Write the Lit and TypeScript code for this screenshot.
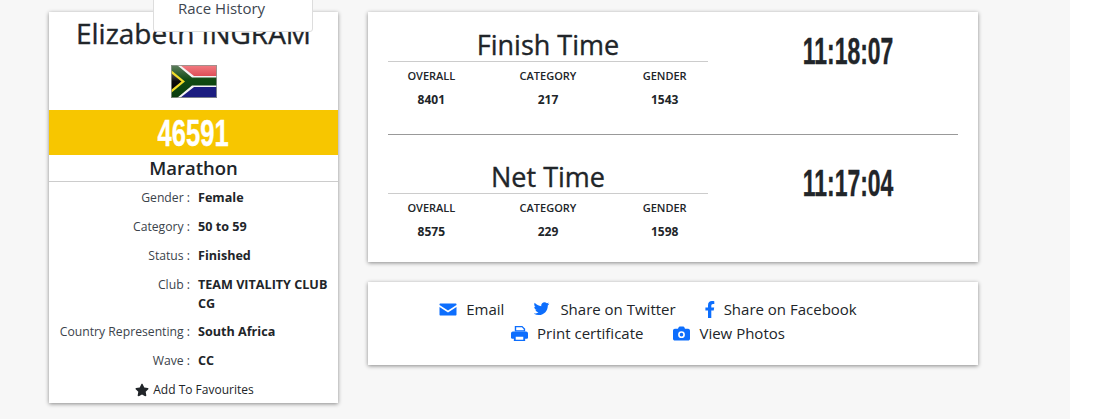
import { LitElement, html, css, svg } from "lit";
import { customElement } from "lit/decorators.js";

const ICONS = {
  mail: { box: "0 0 17 17", path: svg`<path d="M1 2.500h15c.6 0 1 .4 1 1v.6L8.500 9.500 0 4.100V3.500c0-.6.4-1 1-1z"/><path d="M0 6v7.500c0 .6.4 1 1 1h15c.6 0 1-.4 1-1V6L8.500 11.500z"/>` },
  twitter: { box: "0 0 20 20", path: svg`<path d="M16.200 5.300c0 .2 0 .3 0 .5 0 5-3.800 10.700-10.700 10.700-2.100 0-4.100-.6-5.800-1.700.3 0 .6 0 .9 0 1.800 0 3.400-.6 4.700-1.600-1.700 0-3-1.100-3.500-2.600.2 0 .5.100.7.100.3 0 .7 0 1-.1C1.700 10.200.3 8.600.3 6.700v0c.5.300 1.100.5 1.700.5C1 6.500.3 5.300.3 4c0-.7.200-1.300.5-1.900 1.900 2.300 4.600 3.800 7.800 4-.1-.3-.1-.6-.1-.9 0-2.100 1.700-3.800 3.800-3.800 1.100 0 2.100.5 2.800 1.200.9-.2 1.700-.5 2.400-.9-.3.900-.9 1.600-1.700 2.100.8-.1 1.500-.3 2.200-.6-.5.800-1.200 1.500-1.800 2z"/>` },
  facebook: { box: "3 0 10 17", path: svg`<path d="M7.700 9.500l.5-3H5.300v-2C5.300 3.700 5.700 2.900 7 2.900h1.300V.300S7.100.100 6 .100c-2.400 0-4 1.400-4 4.100v2.300H-.600v3H2V17h3.300V9.500z" transform="translate(4 0)"/>` },
  print: { box: "0 0 18 18", path: svg`<path d="M4 1h8l3 3v3H4zM5.500 2.500V5.500h8V4.600L11.500 2.500z" fill-rule="evenodd"/><path d="M2 7h14c1.100 0 2 .9 2 2v4.500c0 .5-.4 1-1 1h-2V17H3v-2.500H1c-.6 0-1-.5-1-1V9c0-1.100.9-2 2-2zm3 5.500v3h8v-3z" fill-rule="evenodd"/>` },
  camera: { box: "0 0 18 18", path: svg`<path fill-rule="evenodd" d="M2 4h3.300l.7-1.700C6.200 1.800 6.700 1.500 7.200 1.500h3.600c.5 0 1 .3 1.200.8L12.700 4H16c1.100 0 2 .9 2 2v8.500c0 1.100-.9 2-2 2H2c-1.100 0-2-.9-2-2V6c0-1.100.9-2 2-2zm7 9.800a3.600 3.600 0 1 0 0-7.200 3.600 3.600 0 0 0 0 7.200zm0-1.700a1.900 1.900 0 1 1 0-3.800 1.900 1.900 0 0 1 0 3.800z"/>` },
};

@customElement("app-root")
export class AppRoot extends LitElement {
  static styles = css`
    :host {
      display: block;
      width: 1101px;
      height: 419px;
      overflow: hidden;
      background: #fff;
      font-family: "Open Sans", "Noto Sans", sans-serif;
      color: #212529;
    }
    .page {
      position: relative;
      box-sizing: border-box;
      width: 1070px;
      height: 419px;
      background: #f7f7f7;
      padding: 12px 0 0 49px;
      display: flex;
      gap: 30px;
      align-items: flex-start;
    }
    .card {
      background: #fff;
      box-shadow: 0 1px 4px rgba(0, 0, 0, 0.45);
    }
    .menu {
      position: absolute;
      left: 153px;
      top: -10px;
      width: 160px;
      height: 42px;
      box-sizing: border-box;
      background: #fff;
      border: 1px solid #ddd;
      border-radius: 0 0 3px 3px;
      padding: 7px 0 0 24px;
      font-size: 15px;
      line-height: 20px;
      color: #3d4650;
      z-index: 2;
    }
    .profile {
      width: 289px;
      height: 391px;
      display: flex;
      flex-direction: column;
      align-items: stretch;
    }
    .name {
      margin: 4px 0 0;
      font-size: 28px;
      line-height: 35px;
      font-weight: 400;
      -webkit-text-stroke: 0.35px #212529;
      text-align: center;
      white-space: nowrap;
    }
    .flag {
      display: block;
      width: 46px;
      height: 33px;
      margin: 14px auto 12px;
    }
    .bib {
      box-sizing: border-box;
      height: 45px;
      padding-top: 3px;
      background: #f7c600;
      color: #fff;
      display: flex;
      align-items: center;
      justify-content: center;
    }
    .condensed {
      font-family: "Liberation Sans", sans-serif;
      font-weight: 700;
      display: inline-block;
      -webkit-text-stroke: 0.4px currentColor;
    }
    .bib .condensed {
      font-size: 36px;
      transform: scaleX(0.71);
    }
    .race {
      height: 26px;
      line-height: 26px;
      border-bottom: 1px solid #ccc;
      text-align: center;
      font-size: 18.500px;
      font-weight: 600;
    }
    .rows {
      display: grid;
      grid-template-columns: 141px 1fr;
      column-gap: 8px;
      padding-top: 6px;
      font-size: 12.200px;
      line-height: 19px;
    }
    .label {
      text-align: right;
      color: #3b434b;
      padding: 0 0 10px 0;
      white-space: nowrap;
    }
    .value {
      font-size: 12.600px;
      font-weight: 700;
      padding: 0 6px 10px 0;
    }
    .value.tall {
      padding-bottom: 9px;
    }
    .fav {
      display: flex;
      justify-content: center;
      align-items: center;
      gap: 4px;
      padding-left: 2px;
      font-size: 12px;
      line-height: 19px;
    }
    .fav svg {
      width: 14px;
      height: 14px;
      fill: #212529;
    }
    .main {
      width: 610px;
      display: flex;
      flex-direction: column;
      gap: 20px;
    }
    .results {
      box-sizing: border-box;
      height: 250px;
      padding: 0 20px;
    }
    .section {
      height: 122px;
      display: flex;
    }
    .section.first {
      border-bottom: 1px solid #999;
    }
    .rank {
      width: 320px;
      padding-top: 16px;
    }
    .section.second .rank {
      padding-top: 25px;
    }
    .title {
      margin: 0;
      height: 33px;
      line-height: 33px;
      border-bottom: 1px solid #ccc;
      font-size: 27px;
      font-weight: 500;
      -webkit-text-stroke: 0.35px #212529;
      text-align: center;
    }
    .stats {
      display: grid;
      grid-template-columns: repeat(3, 1fr);
      text-align: center;
      margin: 5px -15px 0;
    }
    .stats .h {
      font-size: 11px;
      font-weight: 600;
      line-height: 17px;
      margin-bottom: 7px;
    }
    .stats .v {
      font-size: 12px;
      font-weight: 700;
      line-height: 17px;
    }
    .time {
      flex: 1;
      text-align: center;
      box-sizing: content-box;
      padding: 18px 0 0 30px;
      line-height: 44px;
      height: 44px;
    }
    .section.second .time {
      padding-top: 27px;
    }
    .time .condensed {
      font-size: 37px;
      transform: scaleX(0.62);
    }
    .share {
      height: 83px;
      box-sizing: border-box;
      padding: 15px 50px 0 0;
      display: flex;
      flex-direction: column;
      align-items: center;
      font-size: 15px;
      line-height: 24px;
      color: #212529;
    }
    .line {
      display: flex;
      gap: 30px;
    }
    .item {
      display: flex;
      align-items: center;
      gap: 9px;
      white-space: nowrap;
    }
    .item svg {
      width: 17px;
      height: 17px;
      fill: #0d6efd;
      flex: none;
    }
    .item.mail svg {
      width: 18px;
    }
    .item.facebook svg {
      width: 10px;
      margin-left: -1px;
    }
  `;

  private flag() {
    return html`<svg class="flag" viewBox="0 0 46 33" aria-hidden="true">
      <defs>
        <linearGradient id="red" x1="0" y1="0" x2="0" y2="1">
          <stop offset="0" stop-color="#f27c82" />
          <stop offset="1" stop-color="#df4f58" />
        </linearGradient>
        <linearGradient id="green" x1="0" y1="0" x2="0" y2="1">
          <stop offset="0" stop-color="#5f7f5f" />
          <stop offset="0.45" stop-color="#0f4a12" />
          <stop offset="1" stop-color="#0a3c0d" />
        </linearGradient>
        <linearGradient id="black" x1="0" y1="0" x2="0" y2="1">
          <stop offset="0" stop-color="#555" />
          <stop offset="0.5" stop-color="#0c0c0c" />
          <stop offset="1" stop-color="#050505" />
        </linearGradient>
      </defs>
      <rect width="46" height="33" fill="#fff" />
      <rect y="0" width="46" height="11" fill="url(#red)" />
      <rect y="22" width="46" height="11" fill="#1b1d80" />
      <path d="M0 0h9l14 11h23v11H23L9 33H0z" fill="#f4f4f4" />
      <path d="M0 0h6l15 12.500h25v8H21L6 33H0z" fill="url(#green)" />
      <path d="M0 5l14 11.500L0 28z" fill="#f2dc2a" />
      <path d="M0 8l10.500 8.500L0 25z" fill="url(#black)" />
      <rect x="0.500" y="0.500" width="45" height="32" fill="none" stroke="#8f968f" stroke-opacity="0.8" />
    </svg>`;
  }

  private section(name: string, o: string, c: string, g: string, t: string, cls: string) {
    return html`<div class="section ${cls}">
      <div class="rank">
        <h2 class="title">${name}</h2>
        <div class="stats">
          <div class="h">OVERALL</div><div class="h">CATEGORY</div><div class="h">GENDER</div>
          <div class="v">${o}</div><div class="v">${c}</div><div class="v">${g}</div>
        </div>
      </div>
      <div class="time"><span class="condensed">${t}</span></div>
    </div>`;
  }

  private item(icon: keyof typeof ICONS, text: string) {
    const i = ICONS[icon];
    return html`<span class="item ${icon}"><svg viewBox=${i.box} aria-hidden="true">${i.path}</svg>${text}</span>`;
  }

  render() {
    return html`<div class="page">
      <div class="menu">Race History</div>
      <aside class="card profile">
        <h1 class="name">Elizabeth INGRAM</h1>
        ${this.flag()}
        <div class="bib"><span class="condensed">46591</span></div>
        <div class="race">Marathon</div>
        <div class="rows">
          <div class="label">Gender :</div><div class="value">Female</div>
          <div class="label">Category :</div><div class="value">50 to 59</div>
          <div class="label">Status :</div><div class="value">Finished</div>
          <div class="label">Club :</div><div class="value tall">TEAM VITALITY CLUB CG</div>
          <div class="label">Country Representing :</div><div class="value">South Africa</div>
          <div class="label">Wave :</div><div class="value">CC</div>
        </div>
        <div class="fav">
          <svg viewBox="0 0 576 512" aria-hidden="true"><path d="M259.300 17.800L194 150.200 47.900 171.500c-26.200 3.800-36.700 36.100-17.700 54.600l105.700 103-25 145.500c-4.500 26.300 23.200 46 46.400 33.700L288 439.600l130.700 68.700c23.200 12.200 50.900-7.400 46.400-33.700l-25-145.500 105.700-103c19-18.500 8.500-50.800-17.700-54.600L382 150.200 316.700 17.800c-11.700-23.600-45.600-23.900-57.400 0z"/></svg>
          Add To Favourites
        </div>
      </aside>
      <div class="main">
        <div class="card results">
          ${this.section("Finish Time", "8401", "217", "1543", "11:18:07", "first")}
          ${this.section("Net Time", "8575", "229", "1598", "11:17:04", "second")}
        </div>
        <div class="card share">
          <div class="line">
            ${this.item("mail", "Email")}
            ${this.item("twitter", "Share on Twitter")}
            ${this.item("facebook", "Share on Facebook")}
          </div>
          <div class="line">
            ${this.item("print", "Print certificate")}
            ${this.item("camera", "View Photos")}
          </div>
        </div>
      </div>
    </div>`;
  }
}
